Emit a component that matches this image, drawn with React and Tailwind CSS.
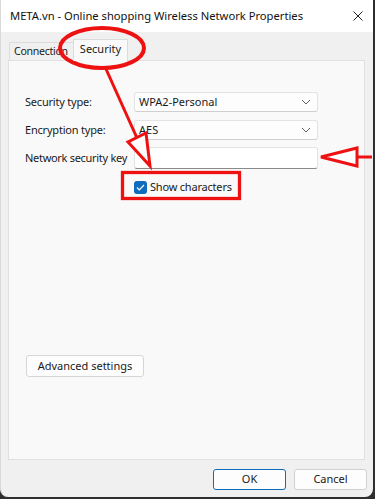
import React from 'react';

const font = { fontFamily: '"Noto Sans", "Open Sans", sans-serif' };

const Chevron = () => (
  <svg width="10" height="6" viewBox="0 0 10 6" className="shrink-0">
    <path d="M1 1l4 4 4-4" fill="none" stroke="#5f5f5f" strokeWidth="1" />
  </svg>
);

const Select = ({ value }) => (
  <div className="w-[184px] h-[20px] bg-[#fdfdfd] border border-[#e3e3e3] border-b-[#cfcfcf] rounded-[3px] flex items-center justify-between pl-[4px] pr-[6px] text-[11px] text-[#1a1a1a]">
    <span>{value}</span>
    <Chevron />
  </div>
);

const Annotations = () => (
  <svg className="absolute inset-0 pointer-events-none" width="375" height="499" viewBox="0 0 375 499">
    <ellipse cx="102" cy="48" rx="42" ry="20" fill="none" stroke="#ee1111" strokeWidth="4" />
    <line x1="106" y1="69" x2="137" y2="138" stroke="#ee1111" strokeWidth="3" />
    <polygon points="150,166 128,142 146,133" fill="#ffffff" stroke="#ee1111" strokeWidth="3" strokeLinejoin="miter" />
    <line x1="356" y1="157" x2="372" y2="157" stroke="#ee1111" strokeWidth="3" />
    <polygon points="321,157 357,148 357,166" fill="#ffffff" stroke="#ee1111" strokeWidth="3" />
    <rect x="122.5" y="172.5" width="117" height="26" fill="none" stroke="#ee1111" strokeWidth="3.3" />
  </svg>
);

export default function App() {
  return (
    <div className="relative w-[375px] h-[499px] bg-[#2e2e2e] overflow-hidden" style={font}>
      <div className="w-[373px] h-[497px] bg-[#f0f0f0] rounded-bl-[8px] rounded-br-[8px] flex flex-col border-l border-[#d9d9d9]">
        {/* title bar */}
        <div className="h-[32px] bg-white flex items-center justify-between pl-[9px] pr-[10px] shrink-0">
          <span className="text-[11.2px] text-[#111] whitespace-nowrap">META.vn - Online shopping Wireless Network Properties</span>
          <svg width="10" height="10" viewBox="0 0 10 10">
            <path d="M0.5 0.5l9 9M9.5 0.5l-9 9" stroke="#222" strokeWidth="1" />
          </svg>
        </div>

        {/* tabs */}
        <div className="flex items-end pl-[8px] pt-[6px] h-[28px] shrink-0">
          <div className="h-[18px] w-[65px] pl-[4px] border border-b-0 border-[#dcdcdc] bg-[#f0f0f0] text-[10.6px] tracking-[-0.3px] text-[#1a1a1a] flex items-center whitespace-nowrap">
            Connection
          </div>
          <div className="h-[22px] w-[55px] -ml-[1px] border border-b-0 border-[#dcdcdc] bg-[#f9f9f9] text-[11px] text-[#1a1a1a] flex items-center justify-center relative z-10 -mb-[1px] pb-[3px]">
            Security
          </div>
        </div>

        {/* panel */}
        <div className="ml-[7px] w-[357px] h-[400px] bg-[#f9f9f9] border border-[#e0e0e0] flex flex-col pl-[16px] pt-[31px] shrink-0 text-[11px] text-[#1a1a1a]">
          <div className="flex items-center h-[20px]">
            <span className="w-[109px] whitespace-nowrap tracking-[-0.2px]">Security type:</span>
            <Select value="WPA2-Personal" />
          </div>
          <div className="flex items-center h-[20px] mt-[8px]">
            <span className="w-[109px] whitespace-nowrap tracking-[-0.2px]">Encryption type:</span>
            <Select value="AES" />
          </div>
          <div className="flex items-center h-[22px] mt-[7px]">
            <span className="w-[109px] whitespace-nowrap tracking-[-0.3px]">Network security key</span>
            <div className="w-[184px] h-[22px] bg-white border border-[#e3e3e3] border-b-[#8a8a8a] rounded-[3px]" />
          </div>
          <div className="flex items-center mt-[12px] ml-[109px] h-[13px]">
            <div className="w-[13px] h-[13px] rounded-[3px] bg-[#0f6cbd] flex items-center justify-center">
              <svg width="9" height="7" viewBox="0 0 9 7">
                <path d="M1 3.5l2.3 2.3L8 1" fill="none" stroke="#fff" strokeWidth="1.2" />
              </svg>
            </div>
            <span className="ml-[3px] whitespace-nowrap tracking-[-0.2px]">Show characters</span>
          </div>

          <button className="mt-[161px] ml-[1px] w-[118px] h-[22px] bg-[#fdfdfd] border border-[#d6d6d6] rounded-[3px] flex items-center justify-center">
            Advanced settings
          </button>
        </div>

        {/* footer */}
        <div className="flex justify-end gap-[8px] pr-[6px] mt-[9px] text-[11px] text-[#1a1a1a]">
          <button className="w-[73px] h-[21px] bg-[#fdfdfd] border border-[#0f6cbd] rounded-[3px] flex items-center justify-center">
            OK
          </button>
          <button className="w-[73px] h-[21px] bg-[#fdfdfd] border border-[#d0d0d0] rounded-[3px] flex items-center justify-center">
            Cancel
          </button>
        </div>
      </div>
      <Annotations />
    </div>
  );
}
